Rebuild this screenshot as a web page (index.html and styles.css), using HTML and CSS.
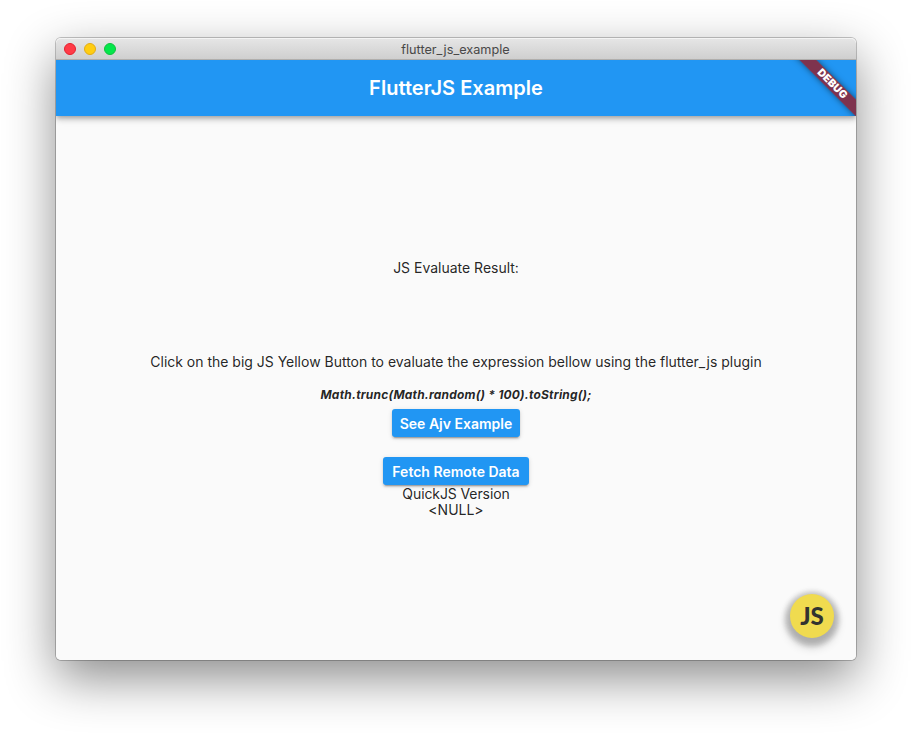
FILE: index.html
```html
<!DOCTYPE html>
<html lang="en">
<head>
<meta charset="utf-8">
<title>flutter_js_example</title>
<link rel="stylesheet" href="styles.css">
</head>
<body>
<div class="window">
  <header class="titlebar">
    <div class="lights"><i class="light close"></i><i class="light minimize"></i><i class="light zoom"></i></div>
    <span class="window-title">flutter_js_example</span>
  </header>
  <div class="app">
    <div class="appbar"><h1 class="app-title">FlutterJS Example</h1></div>
    <main class="content">
      <p class="text result">JS Evaluate Result:</p>
      <p class="text hint">Click on the big JS Yellow Button to evaluate the expression bellow using the flutter_js plugin</p>
      <p class="expression">Math.trunc(Math.random() * 100).toString();</p>
      <button class="button ajv"><span>See Ajv Example</span></button>
      <button class="button fetch"><span>Fetch Remote Data</span></button>
      <p class="text version">QuickJS Version</p>
      <p class="text null">&lt;NULL&gt;</p>
    </main>
    <div class="banner-clip"><div class="banner">DEBUG</div></div>
    <button class="fab"><span class="fab-label">JS</span></button>
  </div>
</div>
</body>
</html>
```

FILE: styles.css
```css
* { box-sizing: border-box; }
body {
  margin: 0;
  height: 734px;
  overflow: hidden;
  padding: 38px 56px 74px;
  background: #fff;
  font-family: Inter, "Liberation Sans", sans-serif;
}
.window {
  width: 800px;
  height: 622px;
  display: flex;
  flex-direction: column;
  border-radius: 5px;
  box-shadow: 0 0 0 1px rgba(0, 0, 0, 0.22), 0 18px 50px rgba(0, 0, 0, 0.46);
}
.titlebar {
  position: relative;
  display: flex;
  align-items: center;
  justify-content: center;
  height: 22px;
  border-radius: 5px 5px 0 0;
  border-bottom: 1px solid #b0aeac;
  background: linear-gradient(#e6e6e6, #cfcfcf);
  box-shadow: inset 0 1px #f4f4f4;
}
.lights { position: absolute; left: 8px; top: 5px; display: flex; gap: 8px; }
.light { width: 12px; height: 12px; border-radius: 50%; border: 1px solid; }
.close { background: #ff3b47; border-color: #e5202e; }
.minimize { background: #ffcd12; border-color: #e3ac15; }
.zoom { background: #04e74b; border-color: #0fc13d; }
.window-title { font-size: 12.7px; line-height: 20px; padding: 2px 1px 0 0; color: #484848; }
.app {
  position: relative;
  flex: 1;
  display: flex;
  flex-direction: column;
  overflow: hidden;
  background: #fafafa;
  border-radius: 0 0 5px 5px;
}
.appbar {
  flex: none;
  display: flex;
  align-items: center;
  justify-content: center;
  height: 56px;
  background: #2196f3;
  box-shadow: 0 2px 4px -1px rgba(0, 0, 0, 0.2), 0 4px 5px rgba(0, 0, 0, 0.14), 0 1px 10px rgba(0, 0, 0, 0.12);
}
.app-title { margin: 0; font-size: 20px; line-height: 24px; font-weight: 600; letter-spacing: 0.03px; color: #fff; }
.content { display: flex; flex-direction: column; align-items: center; padding-top: 144px; }
.text, .expression { margin: 0; color: rgba(0, 0, 0, 0.87); white-space: nowrap; line-height: 16px; }
.text { font-size: 14px; letter-spacing: -0.01px; }
.hint { margin-top: 78px; }
.expression { margin-top: 17px; font-size: 12px; font-weight: 700; font-style: italic; letter-spacing: 0.2px; }
.button {
  height: 28px;
  padding: 2px 0 0;
  border: 0;
  border-radius: 3px;
  background: #2196f3;
  color: #fff;
  font: 600 14px/16px Inter, sans-serif;
  white-space: nowrap;
  box-shadow: 0 3px 1px -2px rgba(0, 0, 0, 0.2), 0 2px 2px rgba(0, 0, 0, 0.14), 0 1px 5px rgba(0, 0, 0, 0.12);
}
.ajv { width: 128px; margin-top: 6px; }
.fetch { width: 146px; margin-top: 20px; }
.version { margin-top: 1px; letter-spacing: -0.1px; }
.banner-clip { position: absolute; top: 0; right: 0; width: 80px; height: 56px; overflow: hidden; }
.banner {
  position: absolute;
  left: 6px;
  top: 18px;
  width: 100px;
  height: 12px;
  transform: translate(0.2px, 0.2px) rotate(45deg);
  background: rgba(133, 43, 65, 0.93);
  box-shadow: 0 0 6px rgba(0, 0, 0, 0.5);
  color: #fff;
  font-size: 10.6px;
  line-height: 12px;
  font-weight: 900;
  letter-spacing: 0.1px;
  text-align: center;
}
.fab {
  position: absolute;
  left: 734px;
  top: 534px;
  width: 44px;
  height: 44px;
  padding: 0;
  border: 0;
  border-radius: 50%;
  background: #f0db4f;
  box-shadow: 0 3px 5px 5px rgba(0, 0, 0, 0.16), 0 6px 10px 4px rgba(0, 0, 0, 0.14), 0 1px 8px 3px rgba(0, 0, 0, 0.06);
}
.fab-label { display: block; font: 900 24px/42px Lato, sans-serif; color: #323330; }
```
